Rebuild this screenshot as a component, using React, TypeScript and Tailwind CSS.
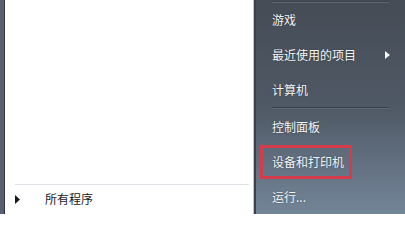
import React from "react";

const font = { fontFamily: '"Noto Sans CJK SC", "Noto Sans", sans-serif' };

function Item({ label, arrow }: { label: string; arrow?: boolean }) {
  return (
    <div className="h-[35px] flex items-center pl-[16px] pr-[15px] text-[12px] text-[#f2f4f6] [text-shadow:0_0_2px_rgba(0,0,0,0.35)]">
      <span className="flex-1">{label}</span>
      {arrow && (
        <svg width="5" height="8" viewBox="0 0 5 8" className="mr-[0px]">
          <path d="M0 0 L5 4 L0 8 Z" fill="#f4f6f8" />
        </svg>
      )}
    </div>
  );
}

function Sep() {
  return (
    <div className="mx-[16px] h-[2px] flex flex-col">
      <div className="h-px bg-[#3b424c]" />
      <div className="h-px bg-[#5d6775]" />
    </div>
  );
}

export default function App() {
  return (
    <div className="w-[405px] h-[214px] flex overflow-hidden bg-white" style={font}>
      <div className="w-[4px] bg-[#56606f]" />
      <div className="w-[1px] bg-[#2e353f]" />
      <div className="flex-1 flex flex-col bg-white border-r border-[#c3c8ce]">
        <div className="flex-1" />
        <div className="ml-[10px] mr-[4px] h-px bg-[#dde1e6]" />
        <div className="h-[28px] flex items-center pl-[10px] text-[12px] text-[#1a1a1a] mb-[1px]">
          <svg width="5" height="9" viewBox="0 0 5 9" className="mr-[25px]">
            <path d="M0 0 L5 4.5 L0 9 Z" fill="#1a1a1a" />
          </svg>
          <span>所有程序</span>
        </div>
      </div>
      <div className="w-[2px] bg-[#3a414b]" />
      <div className="w-[149px] flex flex-col bg-[linear-gradient(180deg,#454c56_0%,#4f5965_50%,#748599_100%)]">
        <div className="h-px" />
        <Sep />
        <Item label="游戏" />
        <Item label="最近使用的项目" arrow />
        <Item label="计算机" />
        <Sep />
        <div className="h-px" />
        <Item label="控制面板" />
        <div className="h-[35px] flex items-center">
          <div className="ml-[4px] w-[92px] h-[34px] border-[3px] border-[#d43c4c] flex items-center pl-[9px] text-[12px] text-[#f2f4f6] [text-shadow:0_0_2px_rgba(0,0,0,0.35)]">
            设备和打印机
          </div>
        </div>
        <Item label="运行..." />
      </div>
    </div>
  );
}
